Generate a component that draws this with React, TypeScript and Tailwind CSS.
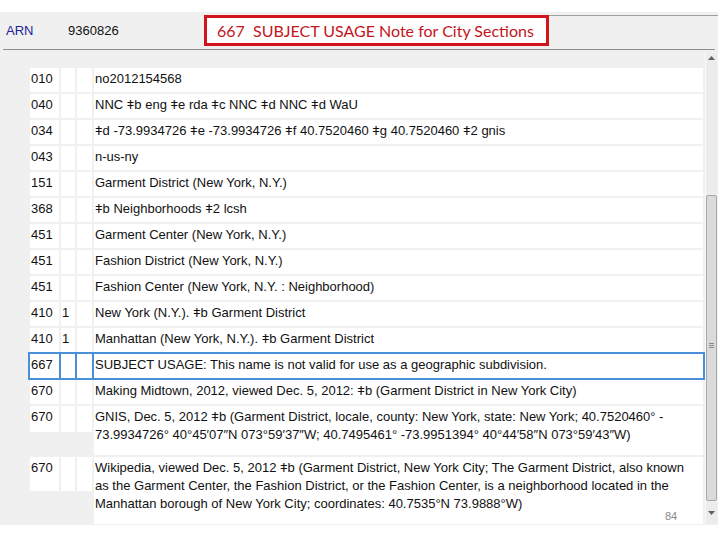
import React from "react";

type Row = { tag: string; ind1?: string; lines: string[]; tagH?: number; selected?: boolean };

const rows: Row[] = [
  { tag: "010", lines: ["no2012154568"] },
  { tag: "040", lines: ["NNC ǂb eng ǂe rda ǂc NNC ǂd NNC ǂd WaU"] },
  { tag: "034", lines: ["ǂd -73.9934726 ǂe -73.9934726 ǂf 40.7520460 ǂg 40.7520460 ǂ2 gnis"] },
  { tag: "043", lines: ["n-us-ny"] },
  { tag: "151", lines: ["Garment District (New York, N.Y.)"] },
  { tag: "368", lines: ["ǂb Neighborhoods ǂ2 lcsh"] },
  { tag: "451", lines: ["Garment Center (New York, N.Y.)"] },
  { tag: "451", lines: ["Fashion District (New York, N.Y.)"] },
  { tag: "451", lines: ["Fashion Center (New York, N.Y. : Neighborhood)"] },
  { tag: "410", ind1: "1", lines: ["New York (N.Y.). ǂb Garment District"] },
  { tag: "410", ind1: "1", lines: ["Manhattan (New York, N.Y.). ǂb Garment District"] },
  { tag: "667", selected: true, lines: ["SUBJECT USAGE: This name is not valid for use as a geographic subdivision."] },
  { tag: "670", lines: ["Making Midtown, 2012, viewed Dec. 5, 2012: ǂb (Garment District in New York City)"] },
  {
    tag: "670",
    tagH: 26,
    lines: [
      "GNIS, Dec. 5, 2012 ǂb (Garment District, locale, county: New York, state: New York; 40.7520460° -",
      "73.9934726° 40°45′07″N 073°59′37″W; 40.7495461° -73.9951394° 40°44′58″N 073°59′43″W)",
    ],
  },
  {
    tag: "670",
    tagH: 34,
    lines: [
      "Wikipedia, viewed Dec. 5, 2012 ǂb (Garment District, New York City; The Garment District, also known",
      "as the Garment Center, the Fashion District, or the Fashion Center, is a neighborhood located in the",
      "Manhattan borough of New York City; coordinates: 40.7535°N 73.9888°W)",
    ],
  },
];

function FieldRow({ row }: { row: Row }) {
  const multi = row.lines.length > 1;
  const cell = "bg-white";
  return (
    <div
      className={
        row.selected
          ? "grid grid-cols-[29px_14px_15px_1fr] gap-x-[2px] items-start bg-[#4a90d9] p-[2px] -my-[2px] -mx-[2px]"
          : "grid grid-cols-[29px_14px_15px_1fr] gap-x-[2px] items-start"
      }
    >
      <div className={`${cell} pt-[2px] leading-[18px] pl-[1px]`} style={{ height: row.tagH ?? 24 }}>
        {row.tag}
      </div>
      <div className={`${cell} pt-[2px] leading-[18px] pl-[1px]`} style={{ height: row.tagH ?? 24 }}>
        {row.ind1 ?? ""}
      </div>
      <div className={cell} style={{ height: row.tagH ?? 24 }} />
      <div className={`${cell} pl-[1px] pt-[2px] leading-[18px] whitespace-nowrap ${multi ? "pb-[11px]" : "pb-[4px]"}`}>
        {row.lines.map((l, i) => (
          <div key={i}>{l}</div>
        ))}
      </div>
    </div>
  );
}

function Scrollbar() {
  return (
    <div className="w-[12px] ml-[2px] mt-[2px] h-[472px] bg-[#ececec] border-l border-[#f8f8f8] flex flex-col items-center">
      <div className="h-[12px] flex items-center justify-center text-[#606060]">
        <svg width="7" height="4" viewBox="0 0 7 4">
          <path d="M0 4 L3.5 0 L7 4 Z" fill="currentColor" />
        </svg>
      </div>
      <div className="h-[131px]" />
      <div className="w-[11px] h-[306px] bg-[#dadada] border border-[#a8a8a8] rounded-[2px] flex flex-col items-center pt-[147px]">
        <div className="w-[5px] h-[1px] bg-[#8a8a8a]" />
        <div className="w-[5px] h-[1px] bg-[#8a8a8a] mt-[1px]" />
        <div className="w-[5px] h-[1px] bg-[#8a8a8a] mt-[1px]" />
      </div>
      <div className="flex-1 flex items-center justify-center text-[#606060]">
        <svg width="7" height="4" viewBox="0 0 7 4">
          <path d="M0 0 L3.5 4 L7 0 Z" fill="currentColor" />
        </svg>
      </div>
    </div>
  );
}

export default function App() {
  return (
    <div className="w-[720px] h-[540px] bg-white relative overflow-hidden font-['Liberation_Sans',Arial,sans-serif] text-[13px] text-[#111]">
      <div className="h-[12px]" />
      <div className="w-[718px] h-[513px] bg-[#f0f0f0]">
        {/* record header */}
        <div className="flex items-start h-[37px]">
          <div className="w-[68px] pl-[6px] pt-[9px] text-[#23239a]">ARN</div>
          <div className="w-[136px] pt-[9px]">9360826</div>
          <div className="mt-[3px] h-[31px] w-[345px] bg-white border-[3px] border-[#d2141c] flex items-center pl-[10px] font-['Lato',sans-serif] text-[16px] text-[#c3151c] whitespace-pre">
            667  SUBJECT USAGE Note for City Sections
          </div>
          <div className="flex-1 mt-[3px] border-t border-[#a0a0a0]" />
        </div>
        <div className="mx-[3px] border-t border-[#8c8c8c]" />

        {/* fields */}
        <div className="flex">
          <div className="w-[673px] ml-[30px] pt-[18px] flex flex-col gap-y-[2px]">
            {rows.map((r, i) => (
              <FieldRow key={i} row={r} />
            ))}
          </div>
          <Scrollbar />
        </div>
      </div>

      <div className="absolute left-[665px] top-[508px] text-[11px] text-[#8a8a8a]">84</div>
    </div>
  );
}
